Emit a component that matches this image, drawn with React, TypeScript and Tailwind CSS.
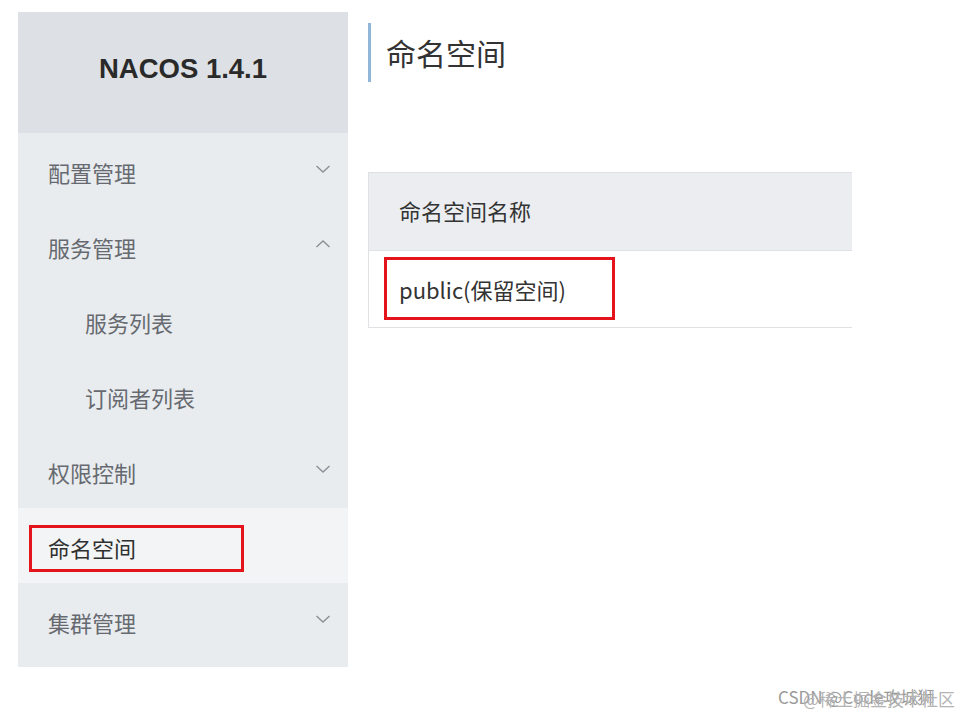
import React from 'react'

const cjk = { fontFamily: '"Noto Sans CJK SC", "Noto Sans", sans-serif' }

interface MenuItem {
  label: string
  sub?: boolean
  chevron?: 'down' | 'up'
  active?: boolean
}

const menu: MenuItem[] = [
  { label: '配置管理', chevron: 'down' },
  { label: '服务管理', chevron: 'up' },
  { label: '服务列表', sub: true },
  { label: '订阅者列表', sub: true },
  { label: '权限控制', chevron: 'down' },
  { label: '命名空间', active: true },
  { label: '集群管理', chevron: 'down' },
]

const Chevron: React.FC<{ dir: 'down' | 'up' }> = ({ dir }) => (
  <svg width="16" height="10" viewBox="0 0 16 10" fill="none" className="text-[#8c9096]">
    {dir === 'down' ? (
      <path d="M1.5 2 L8 8 L14.5 2" stroke="currentColor" strokeWidth="1.4" />
    ) : (
      <path d="M1.5 8 L8 2 L14.5 8" stroke="currentColor" strokeWidth="1.4" />
    )}
  </svg>
)

export default function App() {
  return (
    <div className="relative w-[968px] h-[718px] bg-white flex overflow-hidden" style={cjk}>
      {/* sidebar */}
      <aside className="ml-[18px] mt-[12px] w-[330px] h-[655px] bg-[#e9ecef] flex flex-col">
        <div className="h-[121px] bg-[#dde1e5] flex items-center justify-center pb-[8px]">
          <span
            className="text-[27.5px] font-bold text-[#2a2a2a] leading-none"
            style={{ fontFamily: '"Liberation Sans", Arial, sans-serif' }}
          >
            NACOS 1.4.1
          </span>
        </div>
        {menu.map((m) => (
          <div
            key={m.label}
            className={`relative h-[75px] flex items-center justify-between pr-[17px] pt-[3px] ${
              m.sub ? 'pl-[67px]' : 'pl-[30px]'
            } ${m.active ? 'bg-[#f3f4f6] text-[#2f2f2f]' : 'text-[#666a70]'}`}
          >
            <span className="text-[22px] leading-none">{m.label}</span>
            {m.chevron && (
              <span className="-mt-[7px]">
                <Chevron dir={m.chevron} />
              </span>
            )}
            {m.active && (
              <div className="absolute left-[11px] top-[17px] w-[215px] h-[47px] border-[3px] border-[#e3141c]" />
            )}
          </div>
        ))}
      </aside>

      {/* main */}
      <main className="ml-[20px] flex-1 flex flex-col">
        <div className="mt-[23px] h-[59px] border-l-[3px] border-[#92b6da] flex items-center pl-[15px]">
          <h1 className="text-[30px] font-normal text-[#333] leading-none -mt-[2px]">命名空间</h1>
        </div>

        <div className="mt-[90px] w-[484px] border-l border-t border-[#dfe1e5]">
          <div className="h-[78px] bg-[#ebedf0] border-b border-[#dfe1e5] flex items-center pl-[30px] pb-[3px]">
            <span className="text-[22px] text-[#333] leading-none">命名空间名称</span>
          </div>
          <div className="relative h-[77px] border-b border-[#dfe1e5] flex items-center pl-[30px]">
            <span className="text-[22px] text-[#333] leading-none">public(保留空间)</span>
            <div className="absolute left-[15px] top-[6px] w-[231px] h-[63px] border-[3px] border-[#e3141c]" />
          </div>
        </div>
      </main>

      {/* watermark */}
      <div className="absolute left-[778px] top-[688px] text-[17px] leading-none text-[#9a9a9a] whitespace-nowrap">
        CSDN @Code攻城狮
      </div>
      <div className="absolute left-[803px] top-[690px] text-[17px] leading-none text-[#b4b4b4] whitespace-nowrap">
        @稀土掘金技术社区
      </div>
    </div>
  )
}
